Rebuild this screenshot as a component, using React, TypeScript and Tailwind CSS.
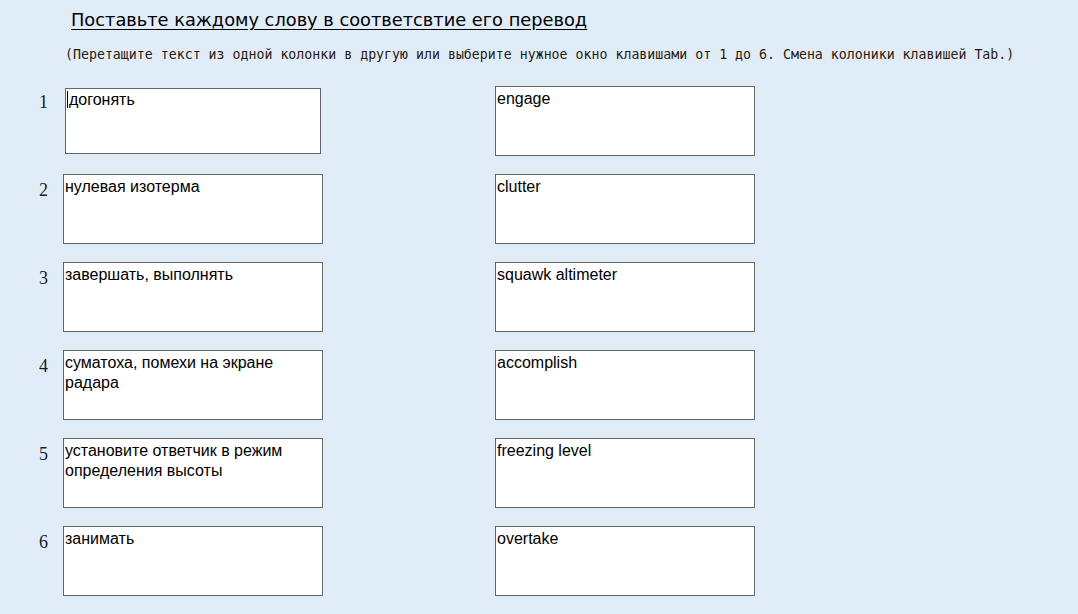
const rows = [
  { left: "догонять", right: "engage" },
  { left: "нулевая изотерма", right: "clutter" },
  { left: "завершать, выполнять", right: "squawk altimeter" },
  { left: "суматоха, помехи на экране радара", right: "accomplish" },
  { left: "установите ответчик в режим определения высоты", right: "freezing level" },
  { left: "занимать", right: "overtake" },
];

function Box({ text, active }: { text: string; active?: boolean }) {
  if (active) {
    return (
      <div className="w-[260px] h-[70px] pt-[2px] pl-[2px]">
        <div className="w-[256px] h-[66px] border border-[#666] bg-white pl-px pt-px text-[16px] leading-[20px] text-black">
          <span className="inline-block w-px h-[17px] bg-black align-[-3px] mr-px" />
          {text}
        </div>
      </div>
    );
  }
  return (
    <div className="w-[260px] h-[70px] border border-[#666] bg-white pl-px pt-[2px] text-[16px] leading-[20px] text-black">
      {text}
    </div>
  );
}

export default function App() {
  return (
    <div className="min-h-screen w-full bg-[#e1ecf9] font-['Liberation_Sans',Arial,sans-serif]">
      <div className="pl-[71px] pt-[9px]">
        <h1 className="font-['DejaVu_Sans',sans-serif] text-[17.8px] leading-[22px] text-black underline underline-offset-[3px]">
          Поставьте каждому слову в соответсвтие его перевод
        </h1>
      </div>
      <p className="pl-[65px] mt-[16px] font-['DejaVu_Sans_Mono',monospace] text-[13.25px] leading-[16px] text-[#2a1a0c]">
        (Перетащите текст из одной колонки в другую или выберите нужное окно клавишами от 1 до 6. Смена колоники клавишей Tab.)
      </p>
      <div className="mt-[23px] flex flex-col gap-[18px]">
        {rows.map((r, i) => (
          <div key={i} className="flex items-start">
            <div className="w-[63px] pl-[39px] pt-[6px] font-['Liberation_Serif',serif] text-[18px] leading-[20px] text-[#1a1a2a]">
              {i + 1}
            </div>
            <Box text={r.left} active={i === 0} />
            <div className="w-[172px]" />
            <Box text={r.right} />
          </div>
        ))}
      </div>
    </div>
  );
}
